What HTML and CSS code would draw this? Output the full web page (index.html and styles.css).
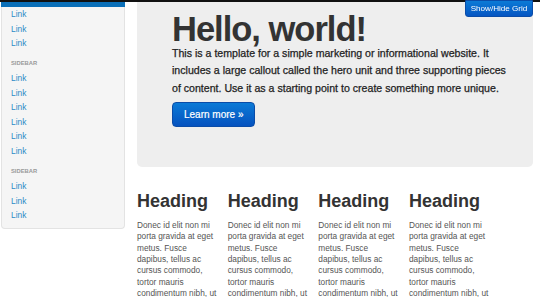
FILE: index.html
```html
<!DOCTYPE html>
<html lang="en">
<head>
  <meta charset="UTF-8">
  <meta name="viewport" content="width=device-width, initial-scale=1.0">
  <title>Bootstrap, from Twitter</title>
  <link rel="stylesheet" href="styles.css">
</head>
<body>
  <div class="navbar"></div>
  <button class="grid-toggle">Show/Hide Grid</button>

  <div class="container">
    <aside class="well">
      <ul class="nav-list">
        <li class="active"></li>
        <li><a href="#">Link</a></li>
        <li><a href="#">Link</a></li>
        <li><a href="#">Link</a></li>
        <li class="nav-header">Sidebar</li>
        <li><a href="#">Link</a></li>
        <li><a href="#">Link</a></li>
        <li><a href="#">Link</a></li>
        <li><a href="#">Link</a></li>
        <li><a href="#">Link</a></li>
        <li><a href="#">Link</a></li>
        <li class="nav-header">Sidebar</li>
        <li><a href="#">Link</a></li>
        <li><a href="#">Link</a></li>
        <li><a href="#">Link</a></li>
      </ul>
    </aside>

    <main class="content">
      <div class="hero-unit">
        <h1>Hello, world!</h1>
        <p>This is a template for a simple marketing or informational website. It includes a large callout called the hero unit and three supporting pieces of content. Use it as a starting point to create something more unique.</p>
        <a class="btn-primary" href="#">Learn more &raquo;</a>
      </div>

      <div class="row">
        <div class="span">
          <h2>Heading</h2>
          <p>Donec id elit non mi porta gravida at eget metus. Fusce dapibus, tellus ac cursus commodo, tortor mauris condimentum nibh, ut fermentum massa justo sit amet risus.</p>
        </div>
        <div class="span">
          <h2>Heading</h2>
          <p>Donec id elit non mi porta gravida at eget metus. Fusce dapibus, tellus ac cursus commodo, tortor mauris condimentum nibh, ut fermentum massa justo sit amet risus.</p>
        </div>
        <div class="span">
          <h2>Heading</h2>
          <p>Donec id elit non mi porta gravida at eget metus. Fusce dapibus, tellus ac cursus commodo, tortor mauris condimentum nibh, ut fermentum massa justo sit amet risus.</p>
        </div>
        <div class="span">
          <h2>Heading</h2>
          <p>Donec id elit non mi porta gravida at eget metus. Fusce dapibus, tellus ac cursus commodo, tortor mauris condimentum nibh, ut fermentum massa justo sit amet risus.</p>
        </div>
      </div>
    </main>
  </div>
</body>
</html>
```

FILE: styles.css
```css
body {
  font-family: 'Liberation Sans', Arial, sans-serif;
  background-color: #fff;
  color: #333;
  margin: 0;
  padding: 0;
  overflow: hidden;
}

.navbar {
  height: 2px;
  background-color: #111;
}

.grid-toggle {
  position: fixed;
  top: 0;
  right: 7px;
  width: 68px;
  height: 17px;
  padding: 0;
  font-family: 'Liberation Sans', Arial, sans-serif;
  font-size: 8.1px;
  color: #fff;
  background: linear-gradient(#0b7ad6, #0555c2);
  border: 1px solid #0a4ca8;
  border-radius: 0 0 3px 3px;
}

.container {
  display: flex;
  gap: 12px;
  padding: 0 7px 0 1px;
}

.well {
  flex: 0 0 124px;
  align-self: flex-start;
  background-color: #f5f5f5;
  border: 1px solid #e3e3e3;
  border-top: none;
  border-radius: 0 0 4px 4px;
  box-sizing: border-box;
  padding-bottom: 5px;
}

.nav-list {
  list-style: none;
  margin: 0;
  padding: 0;
}

.nav-list .active {
  height: 5px;
  margin: 0 -1px;
  background-color: #0a6fb8;
}

.nav-list a {
  display: block;
  padding-left: 9px;
  font-size: 8.4px;
  line-height: 14.5px;
  color: #2b8ac6;
  text-decoration: none;
}

.nav-header {
  margin: 6.3px 0 2.5px;
  padding-left: 9px;
  font-size: 5.8px;
  line-height: 12px;
  font-weight: bold;
  color: #999;
  text-transform: uppercase;
}

.content {
  flex: 0 0 396px;
}

.hero-unit {
  background-color: #eee;
  border-radius: 0 0 5px 5px;
  padding: 10.6px 18px 40px 35px;
}

.hero-unit h1 {
  margin: 0;
  font-size: 34.5px;
  line-height: 32px;
  letter-spacing: -1px;
  font-weight: bold;
  color: #333;
}

.hero-unit p {
  margin: 0 0 5px;
  font-size: 10.6px;
  line-height: 17.5px;
  color: #222;
  -webkit-text-stroke: 0.25px #222;
}

.btn-primary {
  display: inline-block;
  padding: 0 11px;
  height: 25px;
  line-height: 24px;
  box-sizing: border-box;
  font-size: 10px;
  color: #fff;
  -webkit-text-stroke: 0.2px #fff;
  text-decoration: none;
  background: linear-gradient(#0b7ad6, #0552bf);
  border: 1px solid #0a4ca8;
  border-radius: 4px;
}

.row {
  display: grid;
  grid-template-columns: repeat(4, 80px);
  column-gap: 10.67px;
  margin-top: 23px;
}

.span h2 {
  margin: 0 0 8px;
  font-size: 18px;
  line-height: 22px;
  font-weight: bold;
  color: #333;
}

.span p {
  margin: 0;
  font-size: 8.3px;
  line-height: 11.33px;
  color: #555;
}
```
